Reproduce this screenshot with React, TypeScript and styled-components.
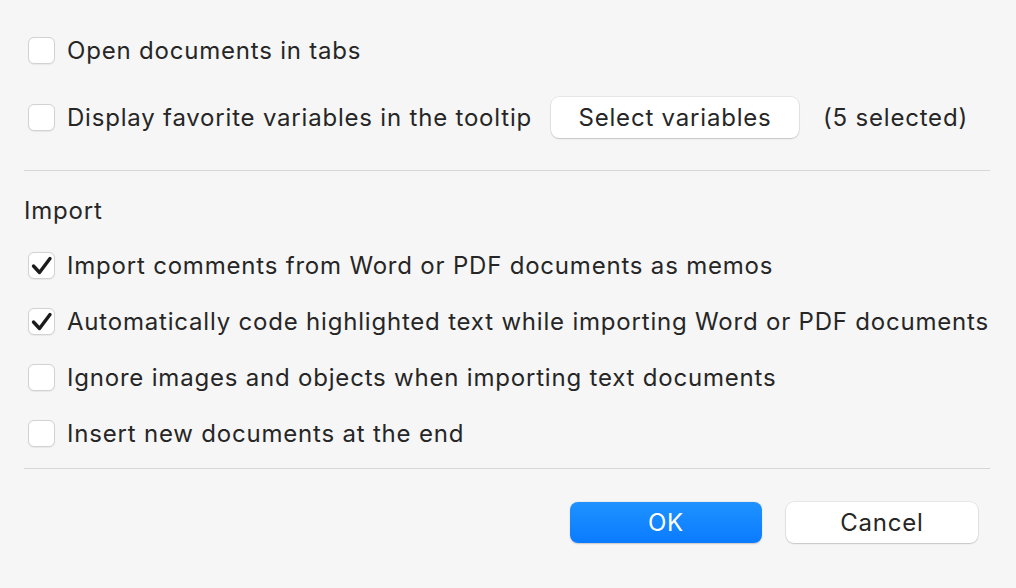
import React from "react";
import styled, { createGlobalStyle } from "styled-components";

const Global = createGlobalStyle`
  html, body { margin: 0; padding: 0; background: #f6f6f6; }
  body { font-family: Inter, "Helvetica Neue", Arial, sans-serif; color: #262626; }
`;

const Page = styled.div`
  width: 1016px;
  height: 588px;
  box-sizing: border-box;
  padding: 22px 26px 0 24px;
  display: flex;
  flex-direction: column;
`;

const Row = styled.div<{ $h: number }>`
  display: flex;
  align-items: center;
  height: ${(p) => p.$h}px;
  padding-left: 4px;
  gap: 12px;
`;

const Box = styled.span`
  width: 27px;
  height: 27px;
  flex: none;
  box-sizing: border-box;
  border: 1px solid #d2d2d2;
  border-radius: 6px;
  background: #ffffff;
  box-shadow: 0 0.5px 1px rgba(0, 0, 0, 0.06);
  position: relative;
`;

const CheckMark = styled.svg`
  position: absolute;
  left: -1px;
  top: -1px;
`;

const Label = styled.span<{ $ml?: number }>`
  font-size: 24px;
  letter-spacing: 0.8px;
  white-space: nowrap;
  margin-left: ${(p) => p.$ml ?? 0}px;
`;

const Divider = styled.div<{ $mt: number }>`
  height: 1px;
  background: #d6d6d6;
  margin-top: ${(p) => p.$mt}px;
`;

const Heading = styled.div`
  font-size: 24px;
  letter-spacing: 0.8px;
  line-height: 28px;
  height: 66px;
  padding-top: 26px;
  box-sizing: border-box;
`;

const Button = styled.button<{ $primary?: boolean; $w: number; $ml?: number }>`
  width: ${(p) => p.$w}px;
  height: 41px;
  margin-left: ${(p) => p.$ml ?? 0}px;
  flex: none;
  border-radius: 8px;
  font-family: inherit;
  font-size: 24px;
  letter-spacing: 0.8px;
  border: none;
  cursor: default;
  color: ${(p) => (p.$primary ? "#ffffff" : "#262626")};
  background: ${(p) =>
    p.$primary ? "linear-gradient(#1f92ff, #0a7bff)" : "#ffffff"};
  box-shadow: ${(p) =>
    p.$primary
      ? "0 0.5px 1.5px rgba(0,0,0,0.2)"
      : "0 0 0 0.5px rgba(0,0,0,0.12), 0 1px 1.5px rgba(0,0,0,0.15)"};
  padding: 0;
`;

const Footer = styled.div`
  display: flex;
  justify-content: flex-end;
  gap: 24px;
  padding-top: 33px;
  padding-right: 12px;
`;

const Check = () => (
  <CheckMark width="27" height="27" viewBox="0 0 27 27">
    <path
      d="M5.5 14 L11.5 20.5 L22 6.5"
      fill="none"
      stroke="#1c1c1c"
      strokeWidth="3.4"
      strokeLinecap="round"
      strokeLinejoin="round"
    />
  </CheckMark>
);

const CheckRow = ({
  checked,
  children,
  h,
}: {
  checked?: boolean;
  children: React.ReactNode;
  h: number;
}) => (
  <Row $h={h}>
    <Box>{checked && <Check />}</Box>
    {children}
  </Row>
);

export default function App() {
  return (
    <>
      <Global />
      <Page>
        <CheckRow h={56}>
          <Label>Open documents in tabs</Label>
        </CheckRow>
        <Row $h={78}>
          <Box />
          <Label>Display favorite variables in the tooltip</Label>
          <Button $w={248} $ml={7}>Select variables</Button>
          <Label $ml={12}>(5 selected)</Label>
        </Row>
        <Divider $mt={14} />
        <Heading>Import</Heading>
        <CheckRow h={56} checked>
          <Label>Import comments from Word or PDF documents as memos</Label>
        </CheckRow>
        <CheckRow h={56} checked>
          <Label>
            Automatically code highlighted text while importing Word or PDF documents
          </Label>
        </CheckRow>
        <CheckRow h={56}>
          <Label>Ignore images and objects when importing text documents</Label>
        </CheckRow>
        <CheckRow h={56}>
          <Label>Insert new documents at the end</Label>
        </CheckRow>
        <Divider $mt={7} />
        <Footer>
          <Button $primary $w={192}>OK</Button>
          <Button $w={192}>Cancel</Button>
        </Footer>
      </Page>
    </>
  );
}
